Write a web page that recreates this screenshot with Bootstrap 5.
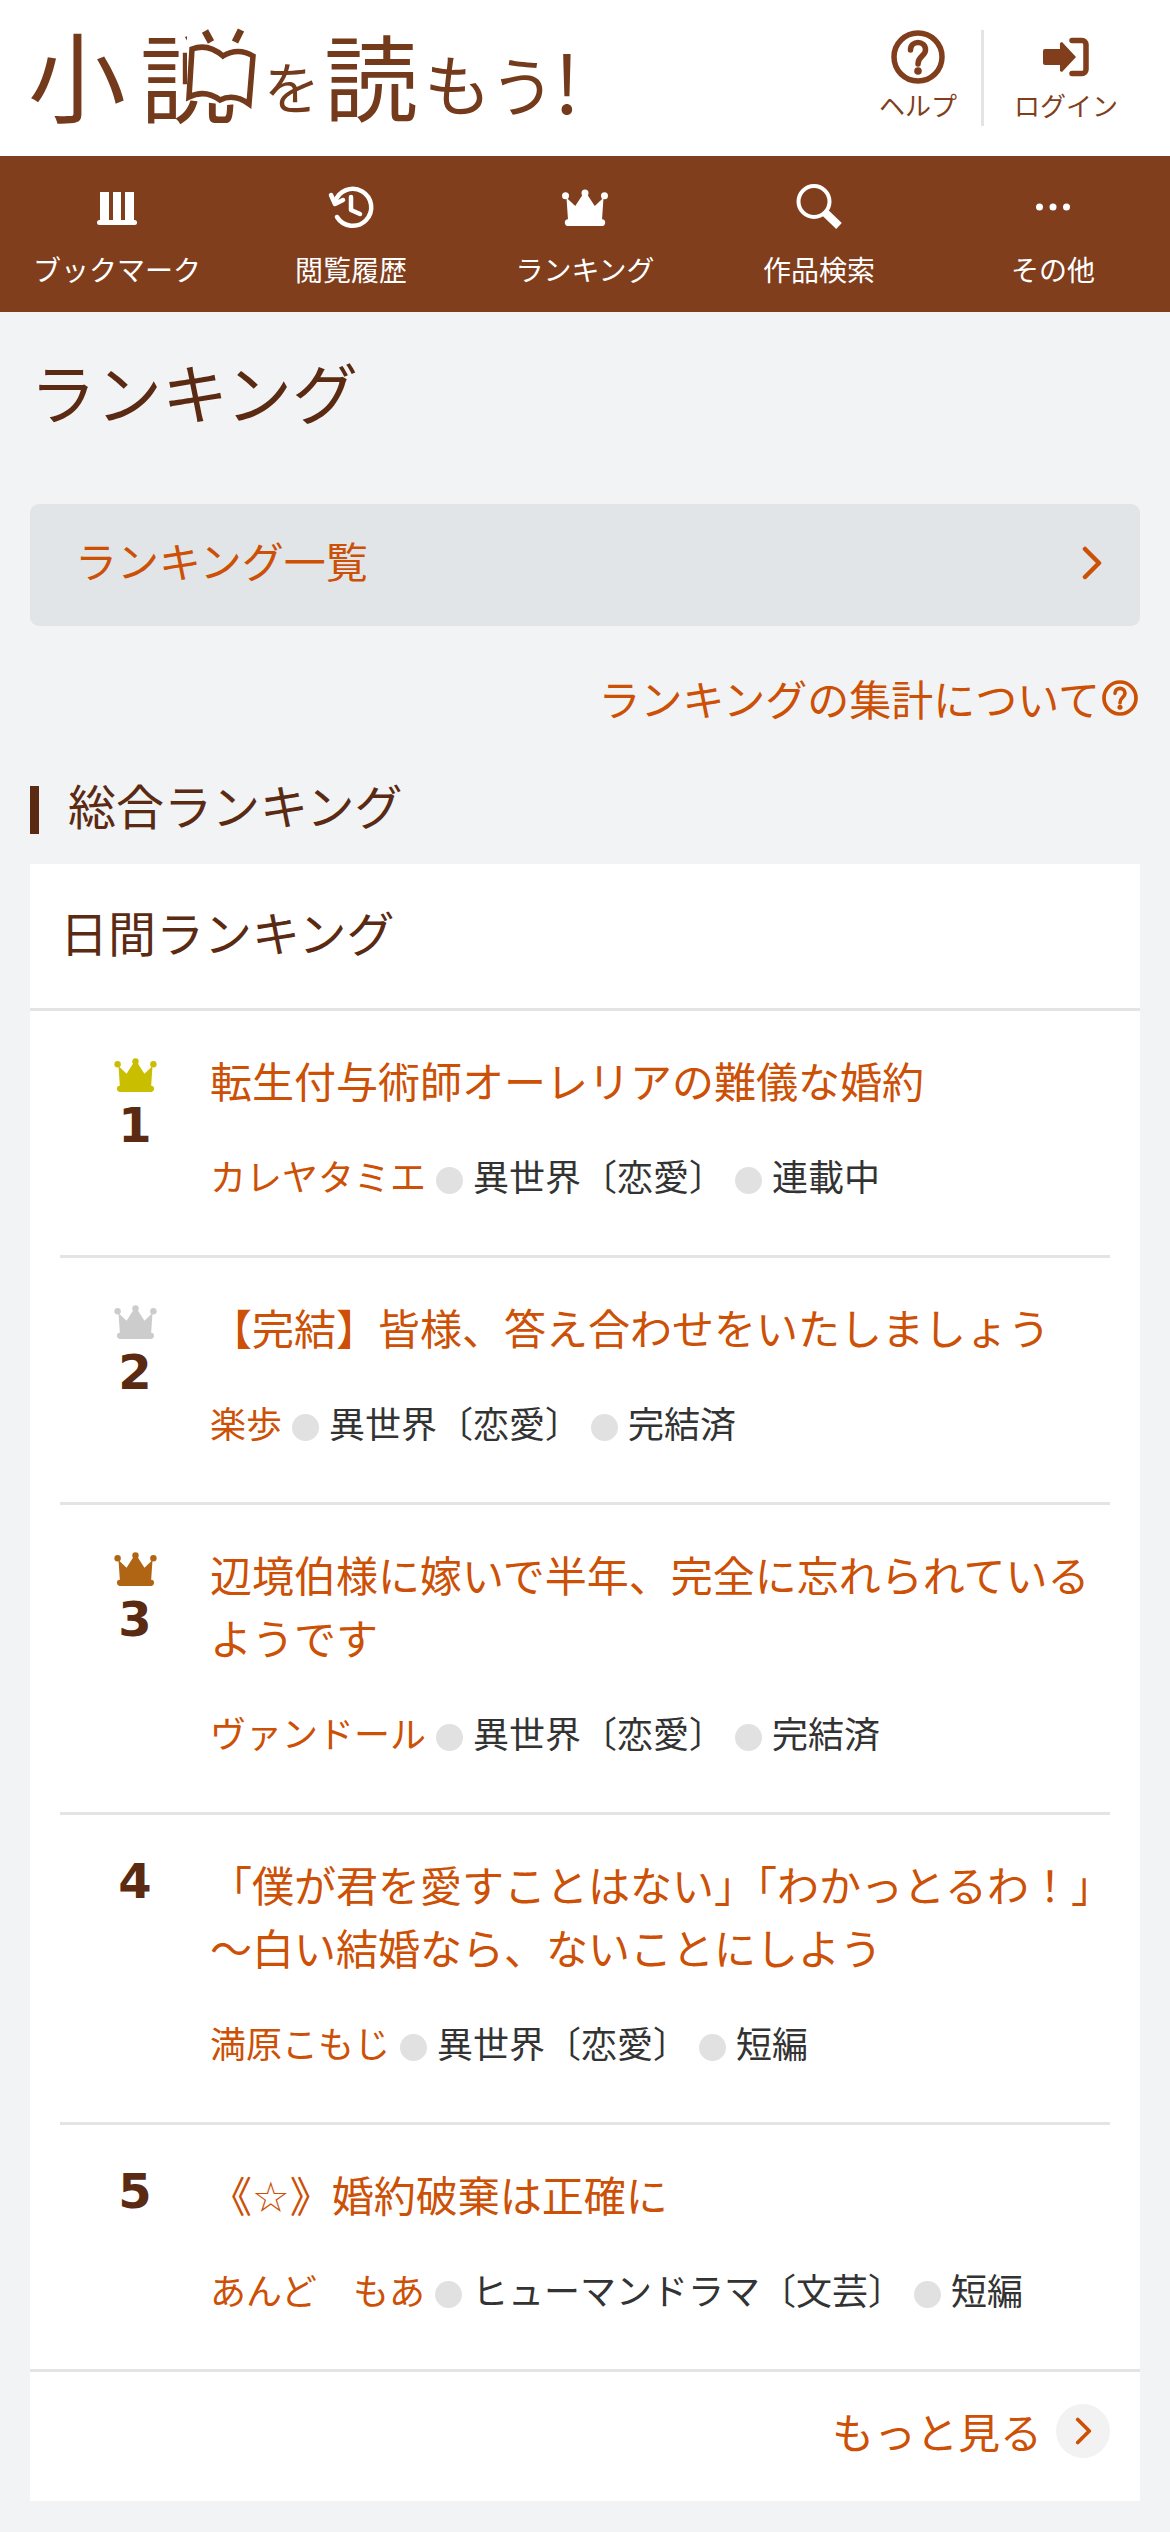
<!DOCTYPE html>
<html lang="ja">
<head>
<meta charset="utf-8">
<meta name="viewport" content="width=device-width, initial-scale=1">
<title>ランキング | 小説を読もう!</title>
<link href="https://cdn.jsdelivr.net/npm/bootstrap@5.3.0/dist/css/bootstrap.min.css" rel="stylesheet">
<style>
:root { --brown: #803e1d; --dark: #5a2a12; --orange: #cc5005; --line: #e4e4e5; }
body { background: #f1f3f5; color: #333; font-family: "Noto Sans CJK JP", sans-serif; font-size: 42px; line-height: 63px; }
a { color: var(--orange); text-decoration: none; }
svg { display: block; flex: none; }
.site-header { min-height: 156px; padding: 24px 52px 24px 30px; }
.logo-art { overflow: visible; }
.head-links { height: 96px; margin-top: 6px; }
.head-link { color: var(--brown); font-size: 26px; line-height: 36px; padding-right: 24px; gap: 3px; }
.head-link + .head-link { border-left: 3px solid var(--line); padding: 0 0 0 30px; }
.global-nav { background: var(--brown); }
.global-nav a { color: #fff; font-size: 28px; line-height: 44px; padding: 27px 0 21px; gap: 16px; }
.page-main { padding: 30px; }
.page-title { color: var(--dark); font-size: 66px; line-height: 96px; margin-bottom: 66px; }
.list-link { background: #e1e5e7; border-radius: 9px; min-height: 122px; padding: 20px 33px 32px 45px; }
.about-link { margin: 40px 2px 45px; }
.about-link a { gap: 2px; }
.section-title { color: var(--dark); font-size: 48px; line-height: 60px; gap: 29px; margin-bottom: 30px; }
.section-title::before { content: ""; width: 9px; height: 48px; background: var(--dark); margin-top: 11px; }
.rank-card { border: 0; border-radius: 0; background: #fff; }
.rank-head { color: var(--dark); font-size: 48px; line-height: 69px; padding: 33px 30px 42px; border-bottom: 3px solid var(--line); margin: 0; }
.rank-list { margin: 0 30px; }
.rank-item { padding: 37px 0 53px; border-bottom: 3px solid var(--line); }
.rank-item:last-child { border-bottom: 0; }
.rank-num { width: 150px; padding-top: 1px; color: var(--dark); font: bold 48px/57px "DejaVu Sans", sans-serif; }
.novel-title { font-size: 42px; line-height: 63px; margin-bottom: 37px; }
.novel-meta { font-size: 36px; line-height: 54px; gap: 10px; }
.dot { width: 27px; height: 27px; border-radius: 50%; background: #e1e1e1; margin-top: 10px; }
.star { font-family: "DejaVu Sans", sans-serif; line-height: 1; }
.gold { color: #c9bf00; } .silver { color: #ccc; } .bronze { color: #b06514; }
.more-row { border-top: 3px solid var(--line); padding: 27px 30px 39px; }
.more-row a { gap: 14px; }
.more-circle { width: 54px; height: 54px; border-radius: 50%; background: #f2f2f3; }
</style>
</head>
<body>
<svg width="0" height="0" class="position-absolute" aria-hidden="true">
  <symbol id="crown" viewBox="0 0 48 38">
    <path fill="currentColor" d="M5 9 14 17.500 21.500 6h5L34 17.500 43 9 41.500 31a3.200 3.200 0 0 1-.5 7H7a3.200 3.200 0 0 1-.5-7z"/>
    <circle cx="24" cy="4" r="3.600" fill="currentColor"/><circle cx="4" cy="7" r="3.600" fill="currentColor"/><circle cx="44" cy="7" r="3.600" fill="currentColor"/>
  </symbol>
  <symbol id="help" viewBox="0 0 54 54">
    <circle cx="27" cy="27" r="24" fill="none" stroke="currentColor" stroke-width="5.500"/>
    <path d="M19.500 20c0-10 15-10 15 0 0 6-7.500 6-7.500 14" fill="none" stroke="currentColor" stroke-width="5.500" stroke-linecap="round"/>
    <circle cx="27" cy="41" r="3.800" fill="currentColor"/>
  </symbol>
  <symbol id="chev" viewBox="0 0 20 34">
    <path d="M3 3 17 17 3 31" fill="none" stroke="currentColor" stroke-width="4.500" stroke-linecap="round" stroke-linejoin="round"/>
  </symbol>
</svg>

<header class="site-header bg-white d-flex justify-content-between align-items-start">
  <a href="#" aria-label="小説を読もう!">
    <svg class="logo-art" width="550" height="108" viewBox="30 24 550 108" fill="#733a1c" font-family="'Noto Sans CJK JP', sans-serif">
      <text x="28" y="115" font-size="98">小</text>
      <text x="140" y="115" font-size="96">説</text>
      <path d="M187 28h72v74l-32 3-40-5z" fill="#fff"/>
      <path d="M190 52q16-6 31 7 15-9 30 0l-4 48q-15-11-29-4-15-11-31-3z" fill="#fff" stroke="#733a1c" stroke-width="5.500" transform="translate(2 -3)"/>
      <path d="m205 31 6 11M241 30l-6 12" fill="none" stroke="#733a1c" stroke-width="7"/>
      <text x="264" y="109" font-size="56">を</text>
      <text x="324" y="115" font-size="94">読</text>
      <text x="424" y="111" font-size="67">も</text>
      <text x="490" y="111" font-size="65">う</text>
      <text x="554" y="114" font-size="80">!</text>
    </svg>
  </a>
  <div class="head-links d-flex">
    <a href="#" class="head-link d-flex flex-column align-items-center"><svg width="54" height="54"><use href="#help"/></svg>ヘルプ</a>
    <a href="#" class="head-link d-flex flex-column align-items-center"><svg width="54" height="54" viewBox="0 0 54 54"><path fill="currentColor" d="M4 21a2 2 0 0 1 2-2h15v-6l2-1 14 15-14 15-2-1v-6H6a2 2 0 0 1-2-2z"/><path d="M33 10.500h10a4 4 0 0 1 4 4v25a4 4 0 0 1-4 4H33" fill="none" stroke="currentColor" stroke-width="5.500" stroke-linecap="round"/></svg>ログイン</a>
  </div>
</header>

<nav class="global-nav" aria-label="メインメニュー">
  <div class="row row-cols-5 g-0">
    <a href="#" class="col d-flex flex-column align-items-center"><svg width="48" height="48" viewBox="0 0 48 48" fill="#fff"><path d="M7 9h9v30H7zM20 9h8v30h-8zM32 9h9v30h-9z"/><rect x="4" y="37" width="40" height="5" rx="2.500"/></svg>ブックマーク</a>
    <a href="#" class="col d-flex flex-column align-items-center"><svg width="48" height="48" viewBox="0 0 48 48" fill="none" stroke="#fff" stroke-width="4.500" stroke-linecap="round" stroke-linejoin="round"><path d="M10 34a18.500 18.500 0 1 0-2-15"/><path d="m4 12 4 9 8-4M24 14v13l9 4"/></svg>閲覧履歴</a>
    <a href="#" class="col d-flex flex-column align-items-center"><svg width="48" height="48"><use href="#crown" y="6" width="48" height="37"/></svg>ランキング</a>
    <a href="#" class="col d-flex flex-column align-items-center"><svg width="48" height="48" viewBox="0 0 48 48" fill="none" stroke="#fff"><circle cx="19" cy="18.500" r="15.500" stroke-width="4"/><path d="M30 29.500 44 43" stroke-width="8"/></svg>作品検索</a>
    <a href="#" class="col d-flex flex-column align-items-center"><svg width="48" height="48" viewBox="0 0 48 48" fill="#fff"><circle cx="10.500" cy="24" r="3.500"/><circle cx="24" cy="24" r="3.500"/><circle cx="37.500" cy="24" r="3.500"/></svg>その他</a>
  </div>
</nav>

<main class="page-main">
  <h1 class="page-title fw-normal">ランキング</h1>
  <a href="#" class="list-link d-flex justify-content-between align-items-center">ランキング一覧<svg width="30" height="34" class="mt-2"><use href="#chev"/></svg></a>
  <div class="about-link d-flex justify-content-end"><a href="#" class="d-flex align-items-center">ランキングの集計について<svg width="36" height="36"><use href="#help"/></svg></a></div>

  <section>
    <h2 class="section-title fw-normal d-flex align-items-center">総合ランキング</h2>
    <div class="card rank-card">
      <h3 class="rank-head fw-normal">日間ランキング</h3>
      <ol class="rank-list list-unstyled">
        <li class="rank-item d-flex">
          <div class="rank-num text-center flex-shrink-0"><svg class="gold mx-auto" width="43" height="48"><use href="#crown" y="9" width="43" height="34"/></svg>1</div>
          <div><h4 class="novel-title fw-normal"><a href="#">転生付与術師オーレリアの難儀な婚約</a></h4>
          <div class="novel-meta d-flex align-items-center flex-wrap"><a href="#">カレヤタミエ</a><span class="dot"></span><span>異世界〔恋愛〕</span><span class="dot"></span><span>連載中</span></div></div>
        </li>
        <li class="rank-item d-flex">
          <div class="rank-num text-center flex-shrink-0"><svg class="silver mx-auto" width="43" height="48"><use href="#crown" y="9" width="43" height="34"/></svg>2</div>
          <div><h4 class="novel-title fw-normal"><a href="#">【完結】皆様、答え合わせをいたしましょう</a></h4>
          <div class="novel-meta d-flex align-items-center flex-wrap"><a href="#">楽歩</a><span class="dot"></span><span>異世界〔恋愛〕</span><span class="dot"></span><span>完結済</span></div></div>
        </li>
        <li class="rank-item d-flex">
          <div class="rank-num text-center flex-shrink-0"><svg class="bronze mx-auto" width="43" height="48"><use href="#crown" y="9" width="43" height="34"/></svg>3</div>
          <div><h4 class="novel-title fw-normal"><a href="#">辺境伯様に嫁いで半年、完全に忘れられているようです</a></h4>
          <div class="novel-meta d-flex align-items-center flex-wrap"><a href="#">ヴァンドール</a><span class="dot"></span><span>異世界〔恋愛〕</span><span class="dot"></span><span>完結済</span></div></div>
        </li>
        <li class="rank-item d-flex">
          <div class="rank-num text-center flex-shrink-0">4</div>
          <div><h4 class="novel-title fw-normal"><a href="#">「僕が君を愛すことはない」「わかっとるわ！」～白い結婚なら、ないことにしよう</a></h4>
          <div class="novel-meta d-flex align-items-center flex-wrap"><a href="#">満原こもじ</a><span class="dot"></span><span>異世界〔恋愛〕</span><span class="dot"></span><span>短編</span></div></div>
        </li>
        <li class="rank-item d-flex">
          <div class="rank-num text-center flex-shrink-0">5</div>
          <div><h4 class="novel-title fw-normal"><a href="#">《<span class="star">☆</span>》婚約破棄は正確に</a></h4>
          <div class="novel-meta d-flex align-items-center flex-wrap"><a href="#">あんど　もあ</a><span class="dot"></span><span>ヒューマンドラマ〔文芸〕</span><span class="dot"></span><span>短編</span></div></div>
        </li>
      </ol>
      <div class="more-row d-flex justify-content-end"><a href="#" class="d-flex align-items-center">もっと見る<span class="more-circle d-flex align-items-center justify-content-center"><svg width="17" height="28"><use href="#chev"/></svg></span></a></div>
    </div>
  </section>
</main>
<script src="https://cdn.jsdelivr.net/npm/bootstrap@5.3.0/dist/js/bootstrap.bundle.min.js"></script>
</body>
</html>
